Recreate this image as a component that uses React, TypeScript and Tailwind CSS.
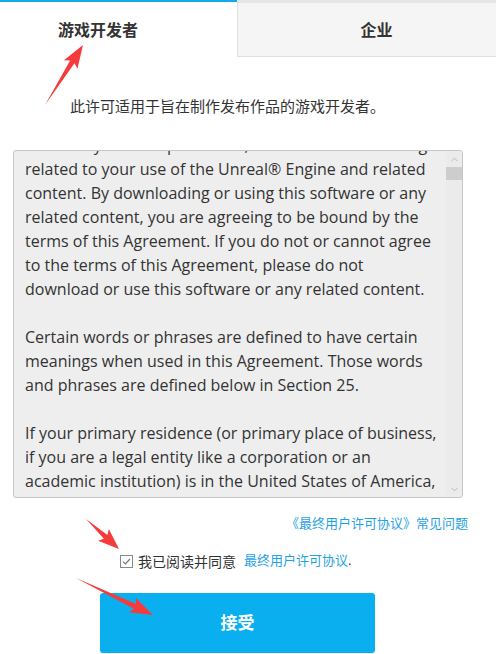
import { ChevronDown, ChevronUp } from 'lucide-react'

const eulaLines = [
  'This Unreal® Engine End User License Agreement is',
  'between you and Epic Games, Inc. and sets out the rights',
  'related to your use of the Unreal® Engine and related',
  'content. By downloading or using this software or any',
  'related content, you are agreeing to be bound by the',
  'terms of this Agreement. If you do not or cannot agree',
  'to the terms of this Agreement, please do not',
  'download or use this software or any related content.',
  '',
  'Certain words or phrases are defined to have certain',
  'meanings when used in this Agreement. Those words',
  'and phrases are defined below in Section 25.',
  '',
  'If your primary residence (or primary place of business,',
  'if you are a legal entity like a corporation or an',
  'academic institution) is in the United States of America,',
  'this Agreement is between you and Epic Games, Inc.',
]

// red annotation arrow, tail -> tip
const arrowPoints = (x1: number, y1: number, x2: number, y2: number, head = 20, hw = 8, tw = 2.6) => {
  const len = Math.hypot(x2 - x1, y2 - y1)
  const dx = (x2 - x1) / len
  const dy = (y2 - y1) / len
  const nx = -dy
  const ny = dx
  const bx = x2 - dx * head
  const by = y2 - dy * head
  const wx = x2 - dx * (head + 3)
  const wy = y2 - dy * (head + 3)
  const pts = [
    [x1, y1],
    [bx + nx * tw, by + ny * tw],
    [wx + nx * hw, wy + ny * hw],
    [x2, y2],
    [wx - nx * hw, wy - ny * hw],
    [bx - nx * tw, by - ny * tw],
  ]
  return pts.map((p) => p.join(',')).join(' ')
}

export default function App() {
  return (
    <div
      className="relative w-[496px] h-[654px] overflow-hidden bg-white text-[#333]"
      style={{ fontFamily: '"Open Sans", "Noto Sans CJK SC", sans-serif' }}
    >
      {/* tabs */}
      <div className="flex h-[57px] -ml-[41px]">
        <div className="w-[278px] shrink-0 border-t-2 border-[#12a9ef] bg-white flex items-center justify-center text-[16px] font-bold">
          游戏开发者
        </div>
        <div className="w-[278px] shrink-0 bg-[#f5f5f5] border-t-[3px] border-t-[#e6e6e6] border-l border-b border-l-[#e0e0e0] border-b-[#e0e0e0] flex items-center justify-center text-[16px] font-bold">
          企业
        </div>
      </div>

      <p className="mt-[38px] pl-[70px] text-[15px] leading-[22px]">
        此许可适用于旨在制作发布作品的游戏开发者。
      </p>

      {/* agreement box */}
      <div className="mt-[33px] ml-[13px] w-[450px] h-[348px] flex border border-[#c6c6c6] rounded-[3px] bg-[#eeeeee] overflow-hidden">
        <div className="flex-1 overflow-hidden pl-[11px]">
          <div className="-mt-[42px] text-[16px] leading-[24px] text-[#333]">
            {eulaLines.map((line, i) => (
              <div key={i} className="whitespace-nowrap h-[24px]">
                {line}
              </div>
            ))}
          </div>
        </div>
        <div className="w-[16px] flex flex-col bg-[#ebebeb]">
          <div className="h-[16px] flex items-center justify-center">
            <ChevronUp size={11} strokeWidth={1.5} className="text-[#a3a3a3]" />
          </div>
          <div className="h-[13px] bg-[#cdcdcd]" />
          <div className="flex-1" />
          <div className="h-[16px] flex items-center justify-center">
            <ChevronDown size={11} strokeWidth={1.5} className="text-[#a3a3a3]" />
          </div>
        </div>
      </div>

      <div className="mt-[16px] pr-[28px] text-right text-[13px] leading-[18px] text-[#1fa2e4]">
        《最终用户许可协议》常见问题
      </div>

      <div className="mt-[20px] pl-[120px] flex items-center h-[18px]">
        <span className="w-[13px] h-[13px] border border-[#8a8a8a] flex items-center justify-center bg-white">
          <svg width="11" height="11" viewBox="0 0 11 11">
            <path d="M2 5.6 L4.4 8 L9 3" fill="none" stroke="#777" strokeWidth="1.2" />
          </svg>
        </span>
        <span className="ml-[5px] text-[14px]">我已阅读并同意</span>
        <span className="ml-[8px] text-[13px] text-[#1fa2e4]">最终用户许可协议</span>
        <span className="text-[13px]">.</span>
      </div>

      <button className="mt-[23px] ml-[100px] w-[275px] h-[60px] rounded-[3px] bg-[#0aaff0] text-white text-[17px] font-bold flex items-center justify-center">
        接受
      </button>

      {/* annotation arrows */}
      <svg className="absolute inset-0 pointer-events-none" width="496" height="654">
        <polygon points={arrowPoints(45, 105, 83, 45)} fill="#f53b3b" />
        <polygon points={arrowPoints(86, 519, 119, 549, 18)} fill="#f53b3b" />
        <polygon points={arrowPoints(76, 578, 153, 615)} fill="#f53b3b" />
      </svg>
    </div>
  )
}
